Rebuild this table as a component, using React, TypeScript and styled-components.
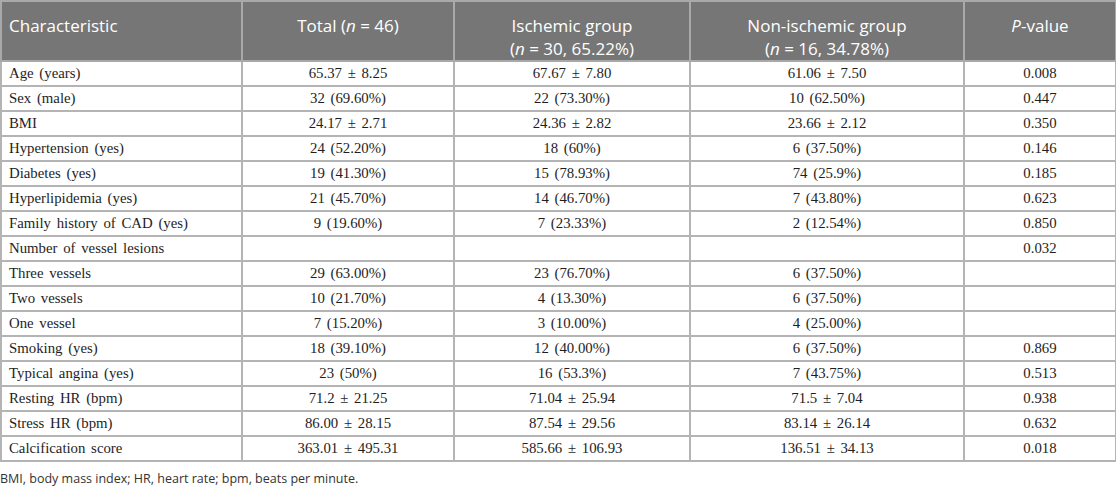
import React from "react";
import styled, { createGlobalStyle } from "styled-components";

const Global = createGlobalStyle`
  html, body { margin: 0; padding: 0; background: #ffffff; }
`;

const Page = styled.div`
  width: 1116px;
  display: flex;
  flex-direction: column;
`;

const Table = styled.table`
  width: 1115px;
  border-collapse: collapse;
  table-layout: fixed;
  border: 2px solid #b4b4b4;
`;

const HeadCell = styled.th<{ $align?: string }>`
  background: #767676;
  color: #ffffff;
  font-family: "Open Sans", "Noto Sans", sans-serif;
  font-weight: 400;
  font-size: 17px;
  line-height: 23px;
  text-align: ${(p) => p.$align || "center"};
  vertical-align: top;
  padding: 12px 7px 0 7px;
  height: 46px;
  border: 2px solid #a9a9a9;
`;

const Cell = styled.td<{ $align?: string }>`
  font-family: "Liberation Serif", "Times New Roman", serif;
  font-size: 14.8px;
  color: #1e1e1e;
  text-align: ${(p) => p.$align || "center"};
  vertical-align: middle;
  padding: 0 7px;
  height: 23px;
  border: 2px solid #b4b4b4;
  white-space: nowrap;
  word-spacing: 2px;
`;

const Note = styled.p`
  margin: 8px 0 0 0;
  font-family: "Open Sans", "Noto Sans", sans-serif;
  font-size: 12.5px;
  color: #333333;
`;

const rows: string[][] = [
  ["Age (years)", "65.37 ± 8.25", "67.67 ± 7.80", "61.06 ± 7.50", "0.008"],
  ["Sex (male)", "32 (69.60%)", "22 (73.30%)", "10 (62.50%)", "0.447"],
  ["BMI", "24.17 ± 2.71", "24.36 ± 2.82", "23.66 ± 2.12", "0.350"],
  ["Hypertension (yes)", "24 (52.20%)", "18 (60%)", "6 (37.50%)", "0.146"],
  ["Diabetes (yes)", "19 (41.30%)", "15 (78.93%)", "74 (25.9%)", "0.185"],
  ["Hyperlipidemia (yes)", "21 (45.70%)", "14 (46.70%)", "7 (43.80%)", "0.623"],
  ["Family history of CAD (yes)", "9 (19.60%)", "7 (23.33%)", "2 (12.54%)", "0.850"],
  ["Number of vessel lesions", "", "", "", "0.032"],
  ["Three vessels", "29 (63.00%)", "23 (76.70%)", "6 (37.50%)", ""],
  ["Two vessels", "10 (21.70%)", "4 (13.30%)", "6 (37.50%)", ""],
  ["One vessel", "7 (15.20%)", "3 (10.00%)", "4 (25.00%)", ""],
  ["Smoking (yes)", "18 (39.10%)", "12 (40.00%)", "6 (37.50%)", "0.869"],
  ["Typical angina (yes)", "23 (50%)", "16 (53.3%)", "7 (43.75%)", "0.513"],
  ["Resting HR (bpm)", "71.2 ± 21.25", "71.04 ± 25.94", "71.5 ± 7.04", "0.938"],
  ["Stress HR (bpm)", "86.00 ± 28.15", "87.54 ± 29.56", "83.14 ± 26.14", "0.632"],
  ["Calcification score", "363.01 ± 495.31", "585.66 ± 106.93", "136.51 ± 34.13", "0.018"],
];

export default function App() {
  return (
    <Page>
      <Global />
      <Table>
        <colgroup>
          <col style={{ width: 241 }} />
          <col style={{ width: 212 }} />
          <col style={{ width: 236 }} />
          <col style={{ width: 274 }} />
          <col style={{ width: 152 }} />
        </colgroup>
        <thead>
          <tr>
            <HeadCell $align="left">Characteristic</HeadCell>
            <HeadCell>
              Total (<i>n</i> = 46)
            </HeadCell>
            <HeadCell>
              Ischemic group
              <br />(<i>n</i> = 30, 65.22%)
            </HeadCell>
            <HeadCell>
              Non-ischemic group
              <br />(<i>n</i> = 16, 34.78%)
            </HeadCell>
            <HeadCell>
              <i>P</i>-value
            </HeadCell>
          </tr>
        </thead>
        <tbody>
          {rows.map((r) => (
            <tr key={r[0]}>
              <Cell $align="left">{r[0]}</Cell>
              <Cell>{r[1]}</Cell>
              <Cell>{r[2]}</Cell>
              <Cell>{r[3]}</Cell>
              <Cell>{r[4]}</Cell>
            </tr>
          ))}
        </tbody>
      </Table>
      <Note>BMI, body mass index; HR, heart rate; bpm, beats per minute.</Note>
    </Page>
  );
}
